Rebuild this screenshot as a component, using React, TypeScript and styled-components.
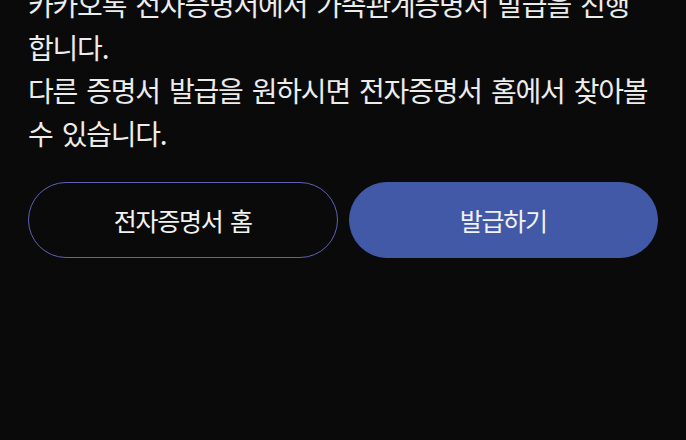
import React from "react";
import styled, { createGlobalStyle } from "styled-components";

const GlobalStyle = createGlobalStyle`
  html, body {
    margin: 0;
    padding: 0;
    background: #0a0a0a;
  }
  body {
    font-family: "Noto Sans CJK KR", "Noto Sans", sans-serif;
    overflow: hidden;
  }
`;

const Page = styled.div`
  width: 686px;
  height: 440px;
  box-sizing: border-box;
  padding: 0 28px;
  background: #0a0a0a;
  display: flex;
  flex-direction: column;
`;

const Message = styled.p`
  margin: -17px 8px 0 0;
  font-size: 28px;
  line-height: 43px;
  letter-spacing: -1.2px;
  word-spacing: 4px;
  color: #ececec;
`;

const ButtonRow = styled.div`
  display: grid;
  grid-template-columns: 1fr 1fr;
  gap: 11px;
  margin-top: 27px;
`;

const ActionButton = styled.button<{ $primary?: boolean }>`
  height: 76px;
  border-radius: 38px;
  box-sizing: border-box;
  border: 1.5px solid ${(p) => (p.$primary ? "#4259a8" : "#5d61b6")};
  background: ${(p) => (p.$primary ? "#4259a8" : "transparent")};
  color: #f2f2f2;
  font-family: "Noto Sans CJK KR", "Noto Sans", sans-serif;
  font-size: 25px;
  letter-spacing: -1.2px;
  word-spacing: 3px;
  display: flex;
  align-items: center;
  justify-content: center;
  padding: 0;
  cursor: pointer;
`;

export default function App() {
  return (
    <>
      <GlobalStyle />
      <Page>
        <Message>
          카카오톡 전자증명서에서 가족관계증명서 발급을 진행합니다.
          <br />
          다른 증명서 발급을 원하시면 전자증명서 홈에서 찾아볼 수 있습니다.
        </Message>
        <ButtonRow>
          <ActionButton>전자증명서 홈</ActionButton>
          <ActionButton $primary>발급하기</ActionButton>
        </ButtonRow>
      </Page>
    </>
  );
}
